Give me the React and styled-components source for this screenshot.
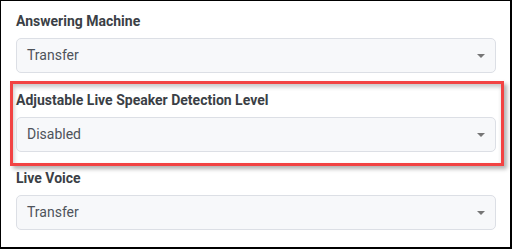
import React from "react";
import styled, { createGlobalStyle } from "styled-components";

const Global = createGlobalStyle`
  html, body { margin: 0; padding: 0; background: #fff; }
  body { font-family: Roboto, "Liberation Sans", Arial, sans-serif; }
`;

const Frame = styled.div`
  box-sizing: border-box;
  width: 512px;
  height: 249px;
  border: 1px solid #000;
  border-right-width: 2px;
  border-bottom-width: 2px;
  background: #fff;
  padding: 12px 14px 0 15px;
  display: flex;
  flex-direction: column;
  gap: 18px;
`;

const Field = styled.div`
  display: flex;
  flex-direction: column;
  gap: 9px;
  ${(p) =>
    p.$highlighted &&
    `
    margin: -10px -8px -14px -6px;
    padding: 8px 5px 11px 3px;
    border: 3px solid #f24343;
    box-shadow: 3px 3px 4px rgba(0,0,0,0.3), inset 1px 3px 4px rgba(0,0,0,0.22);
  `}
`;

const Label = styled.div`
  font-size: 14px;
  line-height: 16px;
  font-weight: 700;
  color: #3b3f46;
  height: 16px;
  white-space: nowrap;
`;

const Select = styled.div`
  box-sizing: border-box;
  height: 35px;
  border: 1px solid #dcdfe5;
  border-radius: 5px;
  background: #f7f8fa;
  display: flex;
  align-items: center;
  justify-content: space-between;
  padding: 0 10px 2px 10px;
`;

const Value = styled.span`
  font-size: 14px;
  line-height: 16px;
  color: #4e535a;
`;

const Caret = styled.span`
  width: 0;
  height: 0;
  border-left: 4px solid transparent;
  border-right: 4px solid transparent;
  border-top: 4px solid #767676;
  margin-top: 2px;
`;

const fields = [
  { label: "Answering Machine", value: "Transfer" },
  { label: "Adjustable Live Speaker Detection Level", value: "Disabled", highlighted: true },
  { label: "Live Voice", value: "Transfer" },
];

export default function App() {
  return (
    <>
      <Global />
      <Frame>
        {fields.map((f) => (
          <Field key={f.label} $highlighted={f.highlighted}>
            <Label>{f.label}</Label>
            <Select>
              <Value>{f.value}</Value>
              <Caret />
            </Select>
          </Field>
        ))}
      </Frame>
    </>
  );
}
